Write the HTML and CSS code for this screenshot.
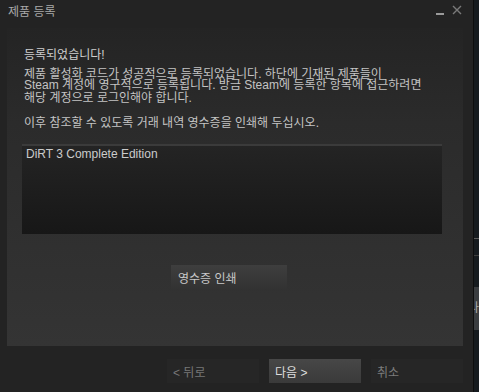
FILE: index.html
```html
<!DOCTYPE html>
<html lang="ko">
<head>
  <meta charset="UTF-8">
  <meta name="viewport" content="width=device-width, initial-scale=1.0">
  <title>제품 등록</title>
  <link rel="stylesheet" href="styles.css">
</head>
<body>
  <div class="window">
    <div class="titlebar">
      <span class="title">제품 등록</span>
      <div class="controls">
        <span class="minimize"></span>
        <svg class="close" width="10" height="10" viewBox="0 0 10 10">
          <path d="M1 1 L9 9 M9 1 L1 9" stroke="#7a7a7a" stroke-width="1.4" fill="none"/>
        </svg>
      </div>
    </div>

    <div class="panel">
      <p class="heading">등록되었습니다!</p>
      <div class="message">
        <div class="line first">제품 활성화 코드가 성공적으로 등록되었습니다. 하단에 기재된 제품들이</div>
        <div class="line">Steam 계정에 영구적으로 등록됩니다. 방금 Steam에 등록한 항목에 접근하려면</div>
        <div class="line">해당 계정으로 로그인해야 합니다.</div>
      </div>
      <p class="note">이후 참조할 수 있도록 거래 내역 영수증을 인쇄해 두십시오.</p>
      <div class="listbox">
        <div class="item">DiRT 3 Complete Edition</div>
      </div>
      <button class="btn print">영수증 인쇄</button>
    </div>

    <div class="footer">
      <button class="btn flat disabled">&lt; 뒤로</button>
      <button class="btn primary">다음 &gt;</button>
      <button class="btn flat">취소</button>
    </div>
  </div>

  <div class="behind">
    <div class="rule rule-a"></div>
    <div class="rule rule-b"></div>
    <div class="tab">나</div>
  </div>
</body>
</html>
```

FILE: styles.css
```css
body {
  margin: 0;
  width: 479px;
  height: 392px;
  display: flex;
  background-color: #161b1f;
  font-family: "Liberation Sans", "Noto Sans CJK KR", sans-serif;
  font-size: 12px;
  color: #c4c4c4;
  overflow: hidden;
}
.window {
  width: 473px;
  height: 392px;
  display: flex;
  flex-direction: column;
  background-color: #232323;
}
.titlebar {
  height: 28px;
  display: flex;
  justify-content: space-between;
  padding: 0 11px 0 8px;
}
.title {
  color: #a9a9a9;
  line-height: 24px;
}
.controls {
  display: flex;
  align-items: flex-start;
  gap: 8px;
  padding-top: 5px;
}
.minimize {
  width: 8px;
  height: 2px;
  margin-top: 8px;
  background-color: #9a9a9a;
}
.panel {
  flex: 1;
  margin: 0 10px 0 7px;
  padding: 19px 21px 0 15px;
  background: linear-gradient(#242424, #2b2b2b 30%, #343434);
}
.heading {
  margin: 0 0 0 2px;
  line-height: 16px;
  color: #cfcfcf;
}
.message {
  margin: 5px 0 0 2px;
}
.line {
  height: 13px;
  line-height: 13px;
  white-space: nowrap;
}
.line.first {
  height: 11px;
}
.note {
  margin: 10px 0 0 2px;
  line-height: 16px;
}
.listbox {
  width: 420px;
  height: 88px;
  margin-top: 13px;
  border-top: 2px solid #3b3b3b;
  background: linear-gradient(#242424, #171717);
}
.item {
  padding: 1px 4px;
  font-size: 12px;
  color: #cbcbcb;
}
.btn {
  display: block;
  width: 92px;
  height: 24px;
  padding: 0 0 0 6px;
  border: none;
  text-align: left;
  font-family: inherit;
  font-size: 12px;
  color: #c8c8c8;
  background: #262626;
}
.btn.print {
  width: 116px;
  margin: 31px 0 0 149px;
  padding-left: 7px;
  background: linear-gradient(#3e3e3e, #323232);
}
.footer {
  height: 46px;
  display: flex;
  justify-content: flex-end;
  gap: 10px;
  padding: 13px 10px 0 0;
  box-sizing: border-box;
}
.btn.primary {
  color: #dedede;
  background: linear-gradient(#474747, #3a3a3a);
}
.btn.flat {
  color: #7c7c7c;
}
.btn.disabled {
  color: #777;
}
.behind {
  flex: 1;
  display: flex;
  flex-direction: column;
  border-left: 1px solid #0e0e0e;
}
.rule {
  height: 1px;
  background-color: #5a5a5a;
}
.rule-a {
  margin-top: 238px;
}
.rule-b {
  margin-top: 16px;
  background-color: #3e3e3e;
}
.tab {
  height: 43px;
  margin-top: 31px;
  overflow: hidden;
  font-size: 12px;
  line-height: 43px;
  color: #aaa;
  text-indent: -6px;
  background-color: #3a3d40;
}
```
